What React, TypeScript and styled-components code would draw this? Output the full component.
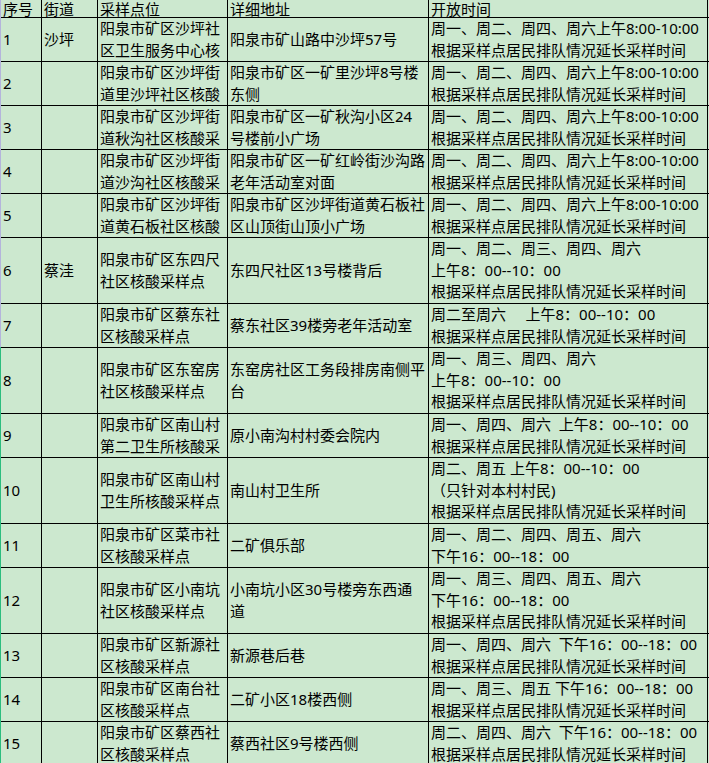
import styled, { createGlobalStyle } from "styled-components";

const GlobalStyle = createGlobalStyle`
  html, body {
    margin: 0;
    padding: 0;
    background: #cce8cf;
    overflow: hidden;
  }
`;

const Sheet = styled.div`
  width: 708px;
  display: flex;
  flex-direction: column;
  gap: 1px;
  background: #000;
  border-left: 1px solid #b4b4dc;
  border-image: linear-gradient(to bottom, #b4b4dc 347px, #2bbd7e 347px) 1;
  font-family: "Noto Sans", "Noto Sans CJK SC", sans-serif;
  font-size: 15px;
  color: #000;
`;

const Row = styled.div<{ $tall?: boolean }>`
  display: grid;
  grid-template-columns: 40px 55px 129px 200px 278px 1px;
  gap: 1px;
  height: ${(props) => (props.$tall ? 65 : 43)}px;
`;

const HeadRow = styled(Row)`
  height: 17px;
`;

const HeadCell = styled.div`
  background: #cce8cf;
  padding: 1px 2px 0;
  line-height: 16px;
  white-space: nowrap;
`;

const Cell = styled.div`
  background: #cce8cf;
  display: flex;
  flex-direction: column;
  justify-content: center;
  padding: 0 2px;
  line-height: 21.5px;
  overflow: hidden;
`;

const Line = styled.span`
  display: block;
  white-space: pre;
`;

const SAME = "根据采样点居民排队情况延长采样时间";
const SHAPING = ["周一、周二、周四、周六上午8:00-10:00", SAME];

interface ISite {
  no: string;
  street?: string;
  site: string[];
  addr: string[];
  hours: string[];
}

const sites: ISite[] = [
  {
    no: "1",
    street: "沙坪",
    site: ["阳泉市矿区沙坪社", "区卫生服务中心核"],
    addr: ["阳泉市矿山路中沙坪57号"],
    hours: SHAPING,
  },
  {
    no: "2",
    site: ["阳泉市矿区沙坪街", "道里沙坪社区核酸"],
    addr: ["阳泉市矿区一矿里沙坪8号楼", "东侧"],
    hours: SHAPING,
  },
  {
    no: "3",
    site: ["阳泉市矿区沙坪街", "道秋沟社区核酸采"],
    addr: ["阳泉市矿区一矿秋沟小区24", "号楼前小广场"],
    hours: SHAPING,
  },
  {
    no: "4",
    site: ["阳泉市矿区沙坪街", "道沙沟社区核酸采"],
    addr: ["阳泉市矿区一矿红岭街沙沟路", "老年活动室对面"],
    hours: SHAPING,
  },
  {
    no: "5",
    site: ["阳泉市矿区沙坪街", "道黄石板社区核酸"],
    addr: ["阳泉市矿区沙坪街道黄石板社", "区山顶街山顶小广场"],
    hours: SHAPING,
  },
  {
    no: "6",
    street: "蔡洼",
    site: ["阳泉市矿区东四尺", "社区核酸采样点"],
    addr: ["东四尺社区13号楼背后"],
    hours: ["周一、周二、周三、周四、周六", "上午8：00--10：00", SAME],
  },
  {
    no: "7",
    site: ["阳泉市矿区蔡东社", "区核酸采样点"],
    addr: ["蔡东社区39楼旁老年活动室"],
    hours: ["周二至周六     上午8：00--10：00", SAME],
  },
  {
    no: "8",
    site: ["阳泉市矿区东窑房", "社区核酸采样点"],
    addr: ["东窑房社区工务段排房南侧平", "台"],
    hours: ["周一、周三、周四、周六", "上午8：00--10：00", SAME],
  },
  {
    no: "9",
    site: ["阳泉市矿区南山村", "第二卫生所核酸采"],
    addr: ["原小南沟村村委会院内"],
    hours: ["周一、周四、周六  上午8：00--10：00", SAME],
  },
  {
    no: "10",
    site: ["阳泉市矿区南山村", "卫生所核酸采样点"],
    addr: ["南山村卫生所"],
    hours: ["周二、周五 上午8：00--10：00", "（只针对本村村民)", SAME],
  },
  {
    no: "11",
    site: ["阳泉市矿区菜市社", "区核酸采样点"],
    addr: ["二矿俱乐部"],
    hours: ["周一、周二、周四、周五、周六", "下午16：00--18：00"],
  },
  {
    no: "12",
    site: ["阳泉市矿区小南坑", "社区核酸采样点"],
    addr: ["小南坑小区30号楼旁东西通", "道"],
    hours: ["周一、周三、周四、周五、周六", "下午16：00--18：00", SAME],
  },
  {
    no: "13",
    site: ["阳泉市矿区新源社", "区核酸采样点"],
    addr: ["新源巷后巷"],
    hours: ["周一、周四、周六  下午16：00--18：00", SAME],
  },
  {
    no: "14",
    site: ["阳泉市矿区南台社", "区核酸采样点"],
    addr: ["二矿小区18楼西侧"],
    hours: ["周一、周三、周五 下午16：00--18：00", SAME],
  },
  {
    no: "15",
    site: ["阳泉市矿区蔡西社", "区核酸采样点"],
    addr: ["蔡西社区9号楼西侧"],
    hours: ["周二、周四、周六  下午16：00--18：00", SAME],
  },
];

const headers = ["序号", "街道", "采样点位", "详细地址", "开放时间", ""];

function Lines({ items }: { items: string[] }) {
  return (
    <>
      {items.map((text, i) => (
        <Line key={i}>{text}</Line>
      ))}
    </>
  );
}

function App() {
  return (
    <>
      <GlobalStyle />
      <Sheet>
        <HeadRow>
          {headers.map((h, i) => (
            <HeadCell key={i}>{h}</HeadCell>
          ))}
        </HeadRow>
        {sites.map((s) => (
          <Row key={s.no} $tall={s.hours.length > 2}>
            <Cell>{s.no}</Cell>
            <Cell>{s.street}</Cell>
            <Cell>
              <Lines items={s.site} />
            </Cell>
            <Cell>
              <Lines items={s.addr} />
            </Cell>
            <Cell>
              <Lines items={s.hours} />
            </Cell>
            <Cell />
          </Row>
        ))}
      </Sheet>
    </>
  );
}

export default App;
